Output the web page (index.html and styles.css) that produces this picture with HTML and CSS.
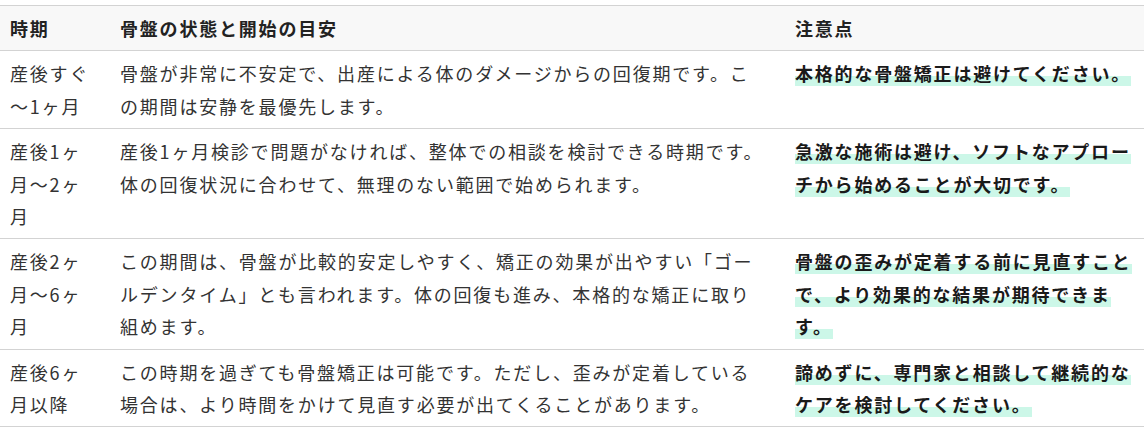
FILE: index.html
```html
<!DOCTYPE html>
<html lang="ja">
<head>
<meta charset="utf-8">
<link rel="stylesheet" href="styles.css">
</head>
<body>
<table class="guide">
  <colgroup>
    <col class="c-period">
    <col class="c-state">
    <col class="c-note">
  </colgroup>
  <thead>
    <tr>
      <th>時期</th>
      <th class="state">骨盤の状態と開始の目安</th>
      <th>注意点</th>
    </tr>
  </thead>
  <tbody>
    <tr>
      <td>産後すぐ～1ヶ月</td>
      <td class="state">骨盤が非常に不安定で、出産による体のダメージからの回復期です。この期間は安静を最優先します。</td>
      <td><strong class="mark">本格的な骨盤矯正は避けてください。</strong></td>
    </tr>
    <tr>
      <td>産後1ヶ月～2ヶ月</td>
      <td class="state">産後1ヶ月検診で問題がなければ、整体での相談を検討できる時期です。体の回復状況に合わせて、無理のない範囲で始められます。</td>
      <td><strong class="mark">急激な施術は避け、ソフトなアプローチから始めることが大切です。</strong></td>
    </tr>
    <tr>
      <td>産後2ヶ月～6ヶ月</td>
      <td class="state">この期間は、骨盤が比較的安定しやすく、矯正の効果が出やすい「ゴールデンタイム」とも言われます。体の回復も進み、本格的な矯正に取り組めます。</td>
      <td><strong class="mark">骨盤の歪みが定着する前に見直すことで、より効果的な結果が期待できます。</strong></td>
    </tr>
    <tr>
      <td>産後6ヶ月以降</td>
      <td class="state">この時期を過ぎても骨盤矯正は可能です。ただし、歪みが定着している場合は、より時間をかけて見直す必要が出てくることがあります。</td>
      <td><strong class="mark">諦めずに、専門家と相談して継続的なケアを検討してください。</strong></td>
    </tr>
  </tbody>
</table>
</body>
</html>
```

FILE: styles.css
```css
html, body {
  margin: 0;
  padding: 0;
  background: #ffffff;
}

body {
  padding: 5px 0;
  font-family: "Noto Sans CJK JP", "Noto Sans", sans-serif;
  font-size: 18px;
  line-height: 1.8;
  letter-spacing: 0.1em;
  color: #333333;
}

.guide {
  width: 100%;
  border-collapse: collapse;
  table-layout: fixed;
  border-top: 1px solid #d3d3d3;
}

.c-period { width: 110px; }
.c-state { width: 675px; }
.c-note { width: auto; }

.guide th,
.guide td {
  text-align: left;
  vertical-align: top;
  padding: 6px 10px 6px 10px;
  border-bottom: 1px solid #d3d3d3;
}

.guide .state {
  padding-right: 16px;
}

.guide th {
  background: #f8f8f8;
  font-weight: 700;
  color: #222222;
}

.mark {
  font-weight: 700;
  color: #1a1a1a;
  background: linear-gradient(transparent 60%, #ccf7e8 60%);
}
```
